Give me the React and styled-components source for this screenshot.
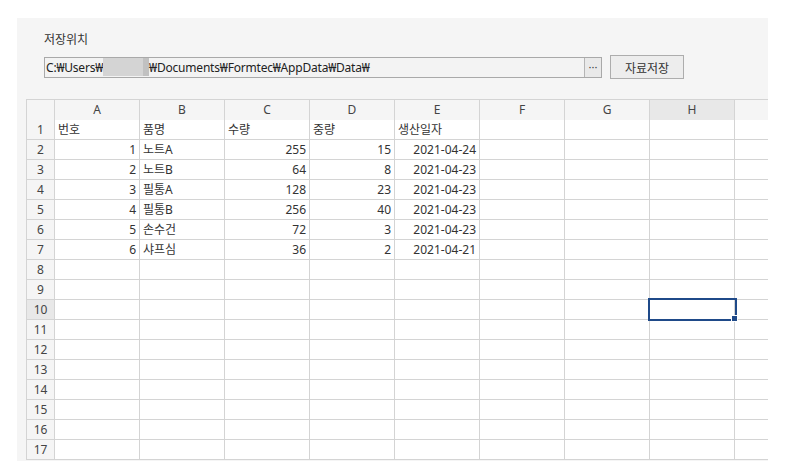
import React from 'react';
import styled, { createGlobalStyle } from 'styled-components';

const GlobalStyle = createGlobalStyle`
  body {
    margin: 0;
    background: #ffffff;
    font-family: "Noto Sans", "Noto Sans CJK KR", sans-serif;
  }
`;

const Page = styled.div`
  padding: 18px 0 0 17px;
`;

const Panel = styled.div`
  width: 751px;
  height: 443px;
  background: #f5f5f5;
  overflow: hidden;
`;

const Header = styled.div`
  padding: 13px 0 0 27px;
`;

const Label = styled.div`
  font-size: 12px;
  line-height: 16px;
  color: #333;
  font-family: "Noto Sans CJK KR", sans-serif;
`;

const PathRow = styled.div`
  display: flex;
  align-items: center;
  gap: 8px;
  margin-top: 8px;
`;

const PathBox = styled.div`
  display: flex;
  width: 558px;
  height: 21px;
  box-sizing: border-box;
  border: 1px solid #a9a9a9;
  background: #f3f3f3;
`;

const PathText = styled.div`
  flex: 1;
  display: flex;
  align-items: center;
  font-size: 12px;
  color: #222;
  padding-left: 1px;
  letter-spacing: -0.2px;
  white-space: nowrap;
  overflow: hidden;
`;

const Masked = styled.span`
  display: inline-block;
  width: 40px;
  height: 18px;
  background: #d4d4d4;
  border-right: 6px solid #c1c1c1;
`;

const Ellipsis = styled.div`
  width: 16px;
  border-left: 1px solid #b5b5b5;
  background: #e9e9e9;
  font-size: 11px;
  line-height: 17px;
  text-align: center;
  color: #444;
`;

const SaveButton = styled.button`
  width: 74px;
  height: 24px;
  border: 1px solid #adadad;
  background: #ededed;
  font-family: "Noto Sans CJK KR", sans-serif;
  font-size: 12px;
  color: #333;
  padding: 0;
`;

const Sheet = styled.div`
  margin: 20px 0 0 9px;
  display: grid;
  grid-template-columns: 28px repeat(9, 85px);
  grid-auto-rows: 20px;
  border-top: 1px solid #d4d4d4;
  border-left: 1px solid #d4d4d4;
  width: max-content;
`;

const Cell = styled.div`
  position: relative;
  box-sizing: border-box;
  border-right: 1px solid #d4d4d4;
  border-bottom: 1px solid #d4d4d4;
  background: ${(p) => (p.$head ? (p.$active ? '#e8e8e8' : '#f5f5f5') : '#ffffff')};
  font-size: 12px;
  line-height: 19px;
  height: ${(p) => (p.$tall ? '21px' : '20px')};
  color: #333;
  text-align: ${(p) => p.$align || 'left'};
  padding: 0 3px 0 3px;
  white-space: nowrap;
  font-family: "Noto Sans", "Noto Sans CJK KR", sans-serif;

  ${(p) =>
    p.$selected &&
    `
    &::after {
      content: '';
      position: absolute;
      top: -2px;
      left: -2px;
      right: -3px;
      bottom: -2px;
      border: 2px solid #1f4a89;
      z-index: 2;
    }
    &::before {
      content: '';
      position: absolute;
      right: -4px;
      bottom: -3px;
      width: 5px;
      height: 5px;
      background: #1f4a89;
      border: 1px solid #ffffff;
      z-index: 3;
    }
  `}
`;

const HeadCell = styled(Cell)`
  text-align: center;
  color: #444;
  line-height: 20px;
  padding: 0;
`;

// the last column (I) is only partly visible; its label falls outside the panel
const columns = ['A', 'B', 'C', 'D', 'E', 'F', 'G', 'H', ''];

const rows = [
  ['번호', '품명', '수량', '중량', '생산일자'],
  [1, '노트A', 255, 15, '2021-04-24'],
  [2, '노트B', 64, 8, '2021-04-23'],
  [3, '필통A', 128, 23, '2021-04-23'],
  [4, '필통B', 256, 40, '2021-04-23'],
  [5, '손수건', 72, 3, '2021-04-23'],
  [6, '샤프심', 36, 2, '2021-04-21'],
];

const alignFor = (r, c) => {
  if (r === 0) return 'left';
  if (c === 1) return 'left';
  return 'right';
};

export default function App() {
  const body = [];
  for (let r = 0; r < 17; r++) {
    const data = rows[r] || [];
    body.push(
      <HeadCell key={`h${r}`} $head $active={r === 9}>
        {r + 1}
      </HeadCell>
    );
    columns.forEach((col, c) => {
      body.push(
        <Cell
          key={`${r}-${c}`}
          $align={alignFor(r, c)}
          $selected={r === 9 && col === 'H'}
        >
          {data[c]}
        </Cell>
      );
    });
  }

  return (
    <>
      <GlobalStyle />
      <Page>
        <Panel>
          <Header>
            <Label>저장위치</Label>
            <PathRow>
              <PathBox>
                <PathText>
                  C:₩Users₩<Masked />₩Documents₩Formtec₩AppData₩Data₩
                </PathText>
                <Ellipsis>···</Ellipsis>
              </PathBox>
              <SaveButton>자료저장</SaveButton>
            </PathRow>
          </Header>
          <Sheet>
            <HeadCell $head $tall />
            {columns.map((col, c) => (
              <HeadCell key={`c${c}`} $head $tall $active={col === 'H'}>
                {col}
              </HeadCell>
            ))}
            {body}
          </Sheet>
        </Panel>
      </Page>
    </>
  );
}
